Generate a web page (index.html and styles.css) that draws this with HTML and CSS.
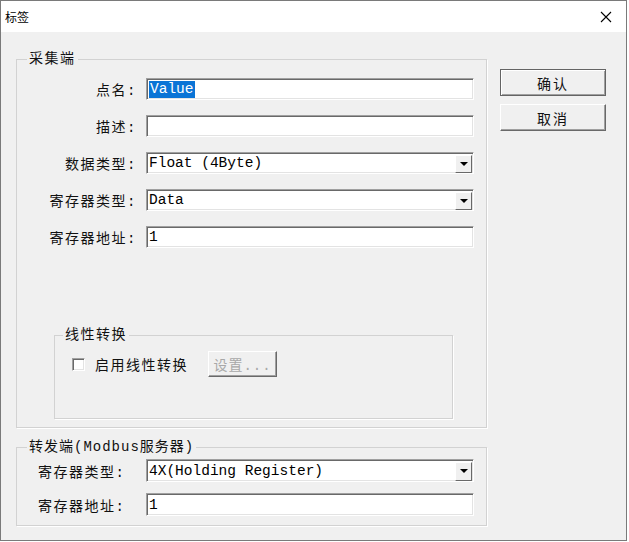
FILE: index.html
```html
<!DOCTYPE html>
<html lang="zh-CN">
<head>
  <meta charset="UTF-8" />
  <title>标签</title>
  <link rel="stylesheet" href="styles.css">
</head>
<body>
  <div class="window">
    <header class="titlebar">
      <span class="title">标签</span>
      <svg class="close" width="12" height="12" viewBox="0 0 12 12">
        <path d="M1 1 L11 11 M11 1 L1 11" stroke="#000" stroke-width="1.1" fill="none"/>
      </svg>
    </header>

    <main class="dialog">
      <div class="groups">
        <fieldset class="group group-collect">
          <legend>采集端</legend>
          <div class="form form-right">
            <label>点名:</label>
            <div class="edit"><span class="selected">Value</span></div>

            <label>描述:</label>
            <div class="edit"></div>

            <label>数据类型:</label>
            <div class="edit combo"><span>Float (4Byte)</span><span class="drop"></span></div>

            <label>寄存器类型:</label>
            <div class="edit combo"><span>Data</span><span class="drop"></span></div>

            <label>寄存器地址:</label>
            <div class="edit"><span>1</span></div>
          </div>

          <fieldset class="group group-linear">
            <legend>线性转换</legend>
            <div class="check-row">
              <span class="checkbox"></span>
              <span class="check-label">启用线性转换</span>
              <button class="btn btn-small" disabled>设置...</button>
            </div>
          </fieldset>
        </fieldset>

        <fieldset class="group group-forward">
          <legend>转发端(Modbus服务器)</legend>
          <div class="form form-left">
            <label>寄存器类型:</label>
            <div class="edit combo tall"><span>4X(Holding Register)</span><span class="drop"></span></div>

            <label>寄存器地址:</label>
            <div class="edit tall"><span>1</span></div>
          </div>
        </fieldset>
      </div>

      <div class="actions">
        <button class="btn btn-default">确认</button>
        <button class="btn">取消</button>
      </div>
    </main>
  </div>
</body>
</html>
```

FILE: styles.css
```css
:root {
  --face: #f0f0f0;
  --shadow: #696969;
  --light-shadow: #a0a0a0;
  --etch: #d2d2d2;
  --label-font: "Liberation Mono", "Noto Sans CJK SC", monospace;
  --edit-font: "Liberation Mono", monospace;
}
* { box-sizing: border-box; }
body {
  margin: 0;
  background: #fff;
  font-family: var(--label-font);
  color: #111;
}
.window {
  width: 627px;
  height: 541px;
  border: 1px solid #7a7a7a;
  background: var(--face);
  display: flex;
  flex-direction: column;
}
.titlebar {
  height: 31px;
  background: #fff;
  display: flex;
  justify-content: space-between;
  align-items: center;
  padding: 0 14px 0 4px;
}
.title {
  font-family: "Noto Sans CJK SC", sans-serif;
  font-size: 12px;
  color: #000;
}
.close {
  display: block;
}
.dialog {
  display: flex;
  align-items: flex-start;
  padding: 19px 0 0 15px;
}
.groups {
  width: 471px;
}
.group {
  margin: 0;
  padding: 0;
  min-width: 0;
  border: 1px solid var(--etch);
  box-shadow: 1px 1px 0 #fff;
}
.group legend {
  margin-left: 10px;
  padding: 0 2px;
  font-size: 14px;
  line-height: 16px;
  letter-spacing: 1.5px;
  background: var(--face);
}
.group-collect {
  padding-bottom: 8px;
}
.group-linear {
  width: 399px;
  margin: 79px 0 0 37px;
}
.group-linear legend {
  margin-left: 8px;
}
.group-forward {
  margin-top: 11px;
  padding-bottom: 9px;
}
.group-forward legend {
  letter-spacing: 1px;
}
.form {
  display: grid;
  align-items: center;
}
.form label {
  font-size: 14px;
  letter-spacing: 1.5px;
  white-space: nowrap;
}
.form-right {
  grid-template-columns: 120px 328px;
  column-gap: 9px;
  row-gap: 15px;
  margin-top: 11px;
}
.form-right label {
  text-align: right;
}
.form-left {
  grid-template-columns: 99px 328px;
  column-gap: 9px;
  row-gap: 11px;
  margin-top: 4px;
  padding-left: 21px;
}
.edit {
  height: 22px;
  background: #fff;
  border: 1px solid;
  border-color: var(--light-shadow) #fff #fff var(--light-shadow);
  box-shadow: inset 1px 1px 0 var(--shadow), inset -1px -1px 0 #e3e3e3;
  display: flex;
  align-items: center;
  padding-left: 2px;
  font-family: var(--edit-font);
  font-size: 14.5px;
  color: #000;
  white-space: nowrap;
}
.edit.tall {
  height: 23px;
}
.selected {
  background: #0a74d6;
  color: #fff;
  padding: 0 1px;
  line-height: 17px;
}
.combo {
  justify-content: space-between;
  padding-right: 1px;
}
.drop {
  width: 17px;
  height: calc(100% - 2px);
  margin-top: 1px;
  background: var(--face);
  border: 1px solid;
  border-color: #fff var(--shadow) var(--shadow) #fff;
  display: flex;
  align-items: center;
  justify-content: center;
}
.drop::after {
  content: "";
  border-left: 4px solid transparent;
  border-right: 4px solid transparent;
  border-top: 4px solid #000;
}
.check-row {
  display: flex;
  align-items: center;
  padding: 8px 0 41px 17px;
}
.checkbox {
  width: 13px;
  height: 13px;
  background: #fff;
  border: 1px solid;
  border-color: var(--light-shadow) #fff #fff var(--light-shadow);
  box-shadow: inset 1px 1px 0 var(--shadow), inset -1px -1px 0 #e3e3e3;
}
.check-label {
  margin-left: 10px;
  font-size: 14px;
  letter-spacing: 1.5px;
}
.btn {
  background: var(--face);
  border: 1px solid;
  border-color: #fff var(--shadow) var(--shadow) #fff;
  box-shadow: inset -1px -1px 0 var(--light-shadow);
  font-family: var(--label-font);
  font-size: 14px;
  letter-spacing: 2px;
  color: #111;
  padding: 0;
  cursor: pointer;
}
.btn-small {
  width: 69px;
  height: 26px;
  margin-left: 20px;
  color: #a8a8a8;
  letter-spacing: 1px;
  cursor: default;
}
.actions {
  display: flex;
  flex-direction: column;
  gap: 8px;
  margin: 18px 0 0 13px;
}
.actions .btn {
  width: 106px;
  height: 27px;
}
.btn-default {
  border-color: #646464;
  box-shadow: inset 1px 1px 0 #fff, inset -1px -1px 0 var(--light-shadow);
}
```
